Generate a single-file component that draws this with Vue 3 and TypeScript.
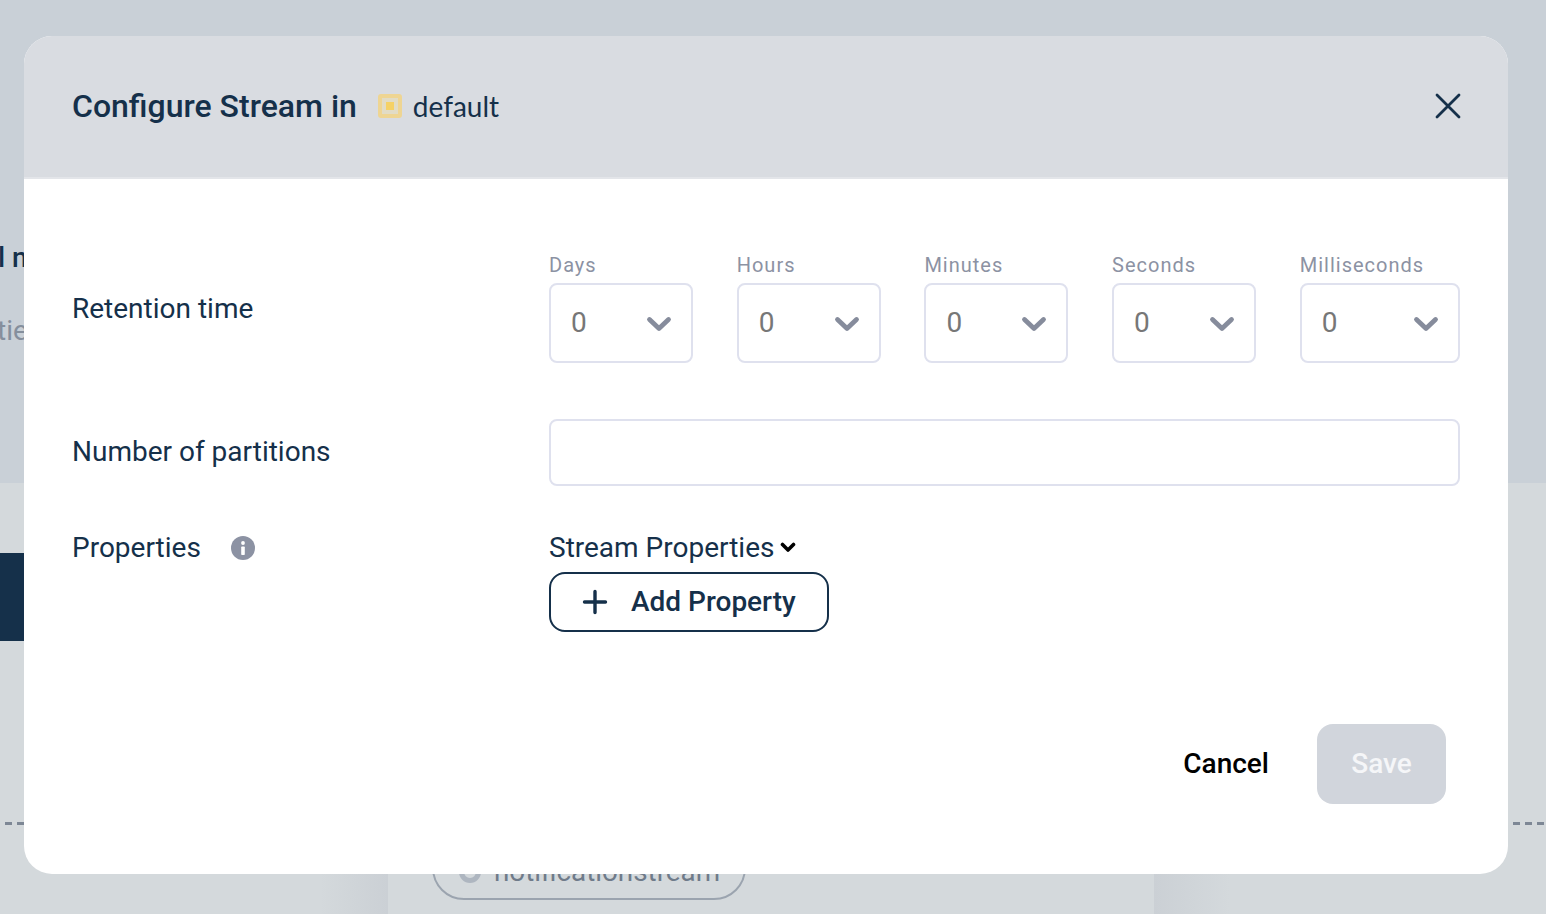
<script setup lang="ts">
interface TimeField { label: string; wide?: boolean }
const fields: TimeField[] = [
  { label: 'Days' },
  { label: 'Hours' },
  { label: 'Minutes' },
  { label: 'Seconds' },
  { label: 'Milliseconds', wide: true },
]
</script>

<template>
  <div class="page">
    <div class="bg-top">
      <span class="bg-name">l n</span>
      <span class="bg-sub">tie</span>
    </div>
    <div class="bg-bottom">
      <div class="bg-dark"></div>
      <div class="bg-panel"></div>
      <div class="bg-dash left"></div>
      <div class="bg-dash right"></div>
      <div class="bg-pill"><span class="bg-pill-dot"></span>notificationstream</div>
    </div>

    <div class="modal">
      <header class="head">
        <h2 class="title">Configure Stream in</h2>
        <span class="ns-icon"><span class="ns-core"></span></span>
        <span class="ns-name">default</span>
        <svg class="close" width="28" height="28" viewBox="0 0 28 28" fill="none">
          <path d="M3 3 25 25M25 3 3 25" stroke="#15304a" stroke-width="2.8" stroke-linecap="round" />
        </svg>
      </header>

      <div class="body">
        <div class="row row-time">
          <div class="label">Retention time</div>
          <div class="times">
            <div v-for="f in fields" :key="f.label" class="time" :class="{ wide: f.wide }">
              <div class="time-label">{{ f.label }}</div>
              <div class="select">
                <span class="select-value">0</span>
                <svg class="select-arrow" width="26" height="16" viewBox="0 0 26 16" fill="none">
                  <path d="M3.5 3.5 13 12.5 22.5 3.5" stroke="#868c9c" stroke-width="4.8" stroke-linecap="round" stroke-linejoin="round" />
                </svg>
              </div>
            </div>
          </div>
        </div>

        <div class="row row-parts">
          <div class="label">Number of partitions</div>
          <div class="input"></div>
        </div>

        <div class="row row-props">
          <div class="label props-label">
            Properties
            <svg class="info" width="24" height="24" viewBox="0 0 24 24">
              <circle cx="12" cy="12" r="12" fill="#8c92a3" />
              <circle cx="12" cy="7" r="1.9" fill="#fff" />
              <rect x="10.2" y="10.4" width="3.6" height="8.6" rx="0.8" fill="#fff" />
            </svg>
          </div>
          <div class="props">
            <div class="props-toggle">
              Stream Properties
              <svg width="16" height="12" viewBox="0 0 16 12" fill="none">
                <path d="M2.5 2.5 8 8 13.5 2.5" stroke="#000" stroke-width="3.6" stroke-linecap="round" stroke-linejoin="round" />
              </svg>
            </div>
            <button class="add" type="button">
              <svg width="26" height="26" viewBox="0 0 26 26" fill="none">
                <path d="M13 2.5V23.5M2.5 13H23.5" stroke="#15304a" stroke-width="3.4" stroke-linecap="round" />
              </svg>
              <span class="add-text">Add Property</span>
            </button>
          </div>
        </div>

        <footer class="foot">
          <button class="cancel" type="button">Cancel</button>
          <button class="save" type="button" disabled>Save</button>
        </footer>
      </div>
    </div>
  </div>
</template>

<style scoped>
.page {
  position: relative;
  width: 1546px;
  height: 914px;
  overflow: hidden;
  display: flex;
  flex-direction: column;
  font-family: Roboto, "Liberation Sans", sans-serif;
  color: #15304a;
}
.bg-top {
  position: relative;
  height: 483px;
  background: #c9d0d7;
}
.bg-name {
  position: absolute;
  left: -2px;
  top: 241px;
  font-size: 28px;
  line-height: 34px;
  font-weight: 500;
  color: #15304a;
}
.bg-sub {
  position: absolute;
  left: -3px;
  top: 314px;
  font-size: 28px;
  line-height: 34px;
  color: #858f9d;
}
.bg-bottom {
  position: relative;
  flex: 1;
  background: #d4d9dc;
}
.bg-dark {
  position: absolute;
  left: 0;
  top: 70px;
  width: 24px;
  height: 88px;
  background: #15304a;
}
.bg-panel {
  position: absolute;
  left: 320px;
  width: 910px;
  top: 380px;
  bottom: 0;
  background: linear-gradient(90deg, #d4d9dc 0, #cbd0d5 68px, #d4d9dc 68px, #d4d9dc 834px, #cbd0d5 834px, #d4d9dc 910px);
}
.bg-dash {
  position: absolute;
  top: 339px;
  height: 3px;
  background: repeating-linear-gradient(90deg, #7d8795 0 7px, transparent 7px 12px);
}
.bg-dash.left {
  left: -7px;
  width: 31px;
}
.bg-dash.right {
  left: 1513px;
  width: 33px;
}
.bg-pill {
  position: absolute;
  left: 432px;
  top: 340px;
  width: 314px;
  height: 77px;
  box-sizing: border-box;
  border: 2px solid #9ba4af;
  border-radius: 32px;
  display: flex;
  align-items: center;
  gap: 13px;
  padding-left: 25px;
  font-size: 27.8px;
  color: #6f7b8a;
  padding-top: 20px;
}
.bg-pill-dot {
  width: 22px;
  height: 22px;
  box-sizing: border-box;
  border: 5px solid #aeb6c0;
  border-radius: 50%;
}
.modal {
  position: absolute;
  left: 24px;
  top: 36px;
  width: 1484px;
  height: 838px;
  border-radius: 28px;
  overflow: hidden;
  background: #fff;
  display: flex;
  flex-direction: column;
}
.head {
  box-sizing: border-box;
  height: 143px;
  flex: none;
  display: flex;
  align-items: center;
  padding: 0 46px 2px 48px;
  background: #d9dce1;
  border-bottom: 2px solid #e3e5e9;
}
.title {
  margin: 0;
  font-size: 32px;
  line-height: 40px;
  font-weight: 500;
  color: #15304a;
}
.ns-icon {
  margin-left: 21px;
  width: 24px;
  height: 24px;
  box-sizing: border-box;
  border: 4px solid #eed593;
  border-radius: 3px;
  background: #e2dcc5;
  display: flex;
  align-items: center;
  justify-content: center;
}
.ns-core {
  width: 8px;
  height: 8px;
  background: #f5d165;
}
.ns-name {
  margin-left: 11px;
  font-family: Lato, sans-serif;
  font-size: 28px;
  line-height: 40px;
  color: #15304a;
}
.close {
  margin-left: auto;
}
.body {
  flex: 1;
  display: flex;
  flex-direction: column;
  padding: 0 48px 0 48px;
}
.row {
  display: grid;
  grid-template-columns: 477px 911px;
}
.row-time {
  padding-top: 74px;
}
.row-parts {
  margin-top: 56px;
}
.row-props {
  margin-top: 40px;
}
.label {
  font-size: 28px;
  line-height: 40px;
  color: #15304a;
}
.row-time .label {
  padding-top: 36px;
}
.row-parts .label {
  padding-top: 13px;
}
.props-label {
  display: flex;
  align-items: center;
  gap: 30px;
  height: 44px;
}
.times {
  display: flex;
  gap: 43.7px;
}
.time {
  width: 144px;
}
.time.wide {
  width: 160px;
}
.time-label {
  font-size: 20px;
  line-height: 24px;
  letter-spacing: 1px;
  color: #8c92a3;
  margin-bottom: 6px;
}
.select {
  box-sizing: border-box;
  height: 80px;
  border: 2px solid #dfe1ee;
  border-radius: 8px;
  display: flex;
  align-items: center;
  justify-content: space-between;
  padding: 0 19px 0 20px;
}
.select-value {
  font-size: 28px;
  color: #777;
  margin-top: -2px;
}
.select-arrow {
  margin-top: 2px;
}
.input {
  box-sizing: border-box;
  height: 67px;
  border: 2px solid #dfe1ee;
  border-radius: 8px;
}
.props {
  display: flex;
  flex-direction: column;
  align-items: flex-start;
}
.props-toggle {
  display: flex;
  align-items: center;
  gap: 6px;
  font-size: 28px;
  line-height: 44px;
  height: 44px;
  color: #15304a;
}
.add {
  margin-top: 2px;
  box-sizing: border-box;
  width: 280px;
  height: 60px;
  border: 2px solid #15304a;
  border-radius: 16px;
  background: #fff;
  display: flex;
  align-items: center;
  gap: 23px;
  padding: 0 0 0 31px;
  font-family: inherit;
  font-size: 28px;
  font-weight: 500;
  color: #15304a;
}
.add-text {
  margin-top: -2px;
}
.foot {
  margin-top: 92px;
  display: flex;
  justify-content: flex-end;
  align-items: center;
  gap: 48px;
  padding-right: 14px;
}
.cancel,
.save {
  border: none;
  font-family: inherit;
  font-size: 28px;
  font-weight: 500;
  padding: 0 0 2px;
}
.cancel {
  background: none;
  color: #000;
}
.save {
  width: 129px;
  height: 80px;
  border-radius: 16px;
  background: #d1d5dc;
  color: #f5f6f8;
}
</style>
